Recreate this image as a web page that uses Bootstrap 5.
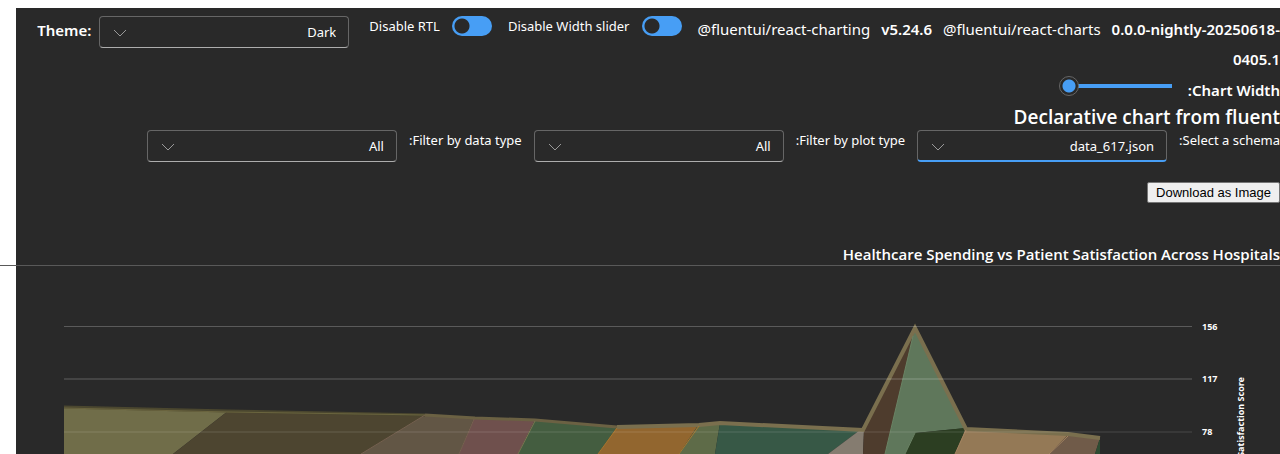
<!DOCTYPE html>
<html lang="en">
<head>
<meta charset="utf-8">
<meta name="viewport" content="width=device-width, initial-scale=1">
<title>Declarative chart</title>
<link href="https://cdn.jsdelivr.net/npm/bootstrap@5.3.0/dist/css/bootstrap.min.css" rel="stylesheet">
<style>
body { background: #fff; font-family: "Noto Sans", "Open Sans", sans-serif; font-size: 13px; line-height: 20px; overflow: hidden; }
.shell { background: #292929; color: #fff; }
.top-bar { padding-top: 6px; }
.top-bar > :not(.versions) { margin-top: 2px; }
.strong-text { font-size: 15px; font-weight: 600; }
.versions { font-size: 15px; line-height: 30px; }
.versions > * + * { margin-left: 11px; }
.combo { appearance: none; width: 250px; height: 32px; padding: 0 12px 0 36px; direction: rtl; color: #fff; font-size: 13px; border: 1px solid #666; border-bottom-color: #adadad; border-radius: 4px;
  background: #292929 url("data:image/svg+xml,%3Csvg xmlns='http://www.w3.org/2000/svg' viewBox='0 0 14 8'%3E%3Cpath d='M1 1l6 6 6-6' fill='none' stroke='%23999'/%3E%3C/svg%3E") no-repeat 13px 12px / 14px 8px; }
.combo-active { border-bottom: 2px solid #479ef5; }
.filter-label { margin: 0 12px; }
.toggle { appearance: none; width: 40px; height: 20px; border-radius: 10px; background: radial-gradient(circle at 10px 10px, #292929 7px, #479ef5 8px); }
.slider-row { padding-top: 2px; }
.width-range { appearance: none; width: 113px; height: 20px; margin: 0; direction: rtl; background: linear-gradient(#479ef5, #479ef5) no-repeat right center / 104px 4px; }
.width-range::-webkit-slider-thumb { appearance: none; width: 20px; height: 20px; border: 1px solid #666; border-radius: 50%; background: radial-gradient(circle, #479ef5 6px, #292929 7px); }
.page-heading { font-family: "Open Sans", sans-serif; font-size: 19px; font-weight: 600; line-height: 26px; }
.download { height: 21px; padding: 0 8px; font: 13px/17px "Liberation Sans", sans-serif; color: #000; background: #efefef; border: 1px solid #767676; border-radius: 2px; }
.chart-title { margin-left: -16px; font-family: "Open Sans", sans-serif; font-size: 15px; font-weight: 600; line-height: 22px; border-bottom: 1px solid #595959; }
.chart { font-size: 9px; font-weight: 700; }
</style>
</head>
<body>
<main class="shell mt-2 ms-3">
  <div class="top-bar d-flex align-items-start">
    <label class="strong-text text-end flex-grow-1 pt-1 me-2" for="theme">Theme:</label>
    <select class="combo flex-shrink-0" id="theme"><option>Dark</option></select>
    <label class="text-nowrap ms-3 me-2 ps-1" for="rtl">Disable RTL</label>
    <input class="toggle flex-shrink-0 ms-1" type="checkbox" role="switch" id="rtl">
    <label class="text-nowrap ms-3 me-2" for="slider-toggle">Disable Width slider</label>
    <input class="toggle flex-shrink-0 ms-1" type="checkbox" role="switch" id="slider-toggle">
    <div class="versions text-end text-nowrap ms-3"><span>@fluentui/react-charting</span><b class="fw-semibold">v5.24.6</b><span>@fluentui/react-charts</span><b class="fw-semibold">0.0.0-nightly-20250618-<br>0405.1</b></div>
  </div>
  <div class="slider-row d-flex justify-content-end">
    <input class="width-range" type="range" id="chart-width" value="100">
    <label class="strong-text ms-3 mt-1" for="chart-width">:Chart Width</label>
  </div>
  <h1 class="page-heading text-end mb-0 mt-1">Declarative chart from fluent</h1>
  <div class="d-flex justify-content-end">
    <select class="combo" id="data-type"><option>All</option></select>
    <label class="filter-label" for="data-type">:Filter by data type</label>
    <select class="combo" id="plot-type"><option>All</option></select>
    <label class="filter-label" for="plot-type">:Filter by plot type</label>
    <select class="combo combo-active" id="schema"><option>data_617.json</option></select>
    <label class="filter-label me-0" for="schema">:Select a schema</label>
  </div>
  <div class="d-flex justify-content-end pt-3 mt-1">
    <button class="download" type="button">Download as Image</button>
  </div>
  <h2 class="chart-title text-end mb-0 mt-4 pt-3">Healthcare Spending vs Patient Satisfaction Across Hospitals</h2>
  <svg class="chart d-block w-100" viewBox="16 266 1264 188" role="img" aria-label="Area chart of satisfaction score">
    <g>
      <path d="M64 407L228 411L173 454H64Z" fill="#706d49"/>
      <path d="M228 411L425 415L361 454H173Z" fill="#4d4530"/>
      <path d="M425 415L474 418L459 454H361Z" fill="#625645"/>
      <path d="M474 418L535 420L518 454H459Z" fill="#6f504d"/>
      <path d="M535 420L617 427L598 454H518Z" fill="#445d40"/>
      <path d="M617 427L699 424L679 454H598Z" fill="#92662f"/>
      <path d="M699 424L720 423L715 454H679Z" fill="#5e6b48"/>
      <path d="M720 423L860 430L828 454H715Z" fill="#375846"/>
      <path d="M860 430H864L863 454H828Z" fill="#857c70"/>
      <path d="M864 430L915 327L885 454H863Z" fill="#4e3c2d"/>
      <path d="M915 327L966 428L915 433L905 454H885Z" fill="#5f775b"/>
      <path d="M915 433L966 428L955 454H905Z" fill="#2c3e22"/>
      <path d="M966 428L1068 435L1049 454H955Z" fill="#947956"/>
      <path d="M1068 435L1100 438L1095 454H1049Z" fill="#705b49"/>
      <path d="M1100 438V454H1095Z" fill="#2e4c33"/>
    </g>
    <g fill="none">
      <path d="M64 407L228 411L425 415" stroke="#4b472f" stroke-width="3"/>
      <path d="M64 408L228 412L425 415" stroke="#6b653f" stroke-width="1"/>
      <path d="M425 415L475 418L535 420L617 427" stroke="#6b6143" stroke-width="3"/>
      <path d="M617 427L699 425L720 423L863 430L915 328L966 429L1068 434L1100 438" stroke="#7a6f4e" stroke-width="4"/>
      <path d="M425 415L361 454M474 419L459 454" stroke="#75614f"/>
      <path d="M535 421L518 454" stroke="#7a7650"/>
      <path d="M617 428L598 454M699 426L679 454" stroke="#a4762f"/>
      <path d="M913 336L885 454M915 433L905 454" stroke="#6b8364"/>
      <path d="M966 430L955 454M1068 436L1049 454" stroke="#a48460"/>
    </g>
    <g stroke="#fff">
      <path d="M64 326.5H1192" stroke-opacity=".23"/>
      <path d="M64 379H1192" stroke-width="2" stroke-opacity=".13"/>
      <path d="M64 432H1192" stroke-width="2" stroke-opacity=".07"/>
    </g>
    <g fill="#fff">
      <text x="1202" y="330">156</text>
      <text x="1202" y="382">117</text>
      <text x="1202" y="435">78</text>
      <text transform="translate(1244 377) rotate(-90)" text-anchor="end">Satisfaction Score</text>
    </g>
  </svg>
</main>
<script src="https://cdn.jsdelivr.net/npm/bootstrap@5.3.0/dist/js/bootstrap.bundle.min.js"></script>
</body>
</html>
